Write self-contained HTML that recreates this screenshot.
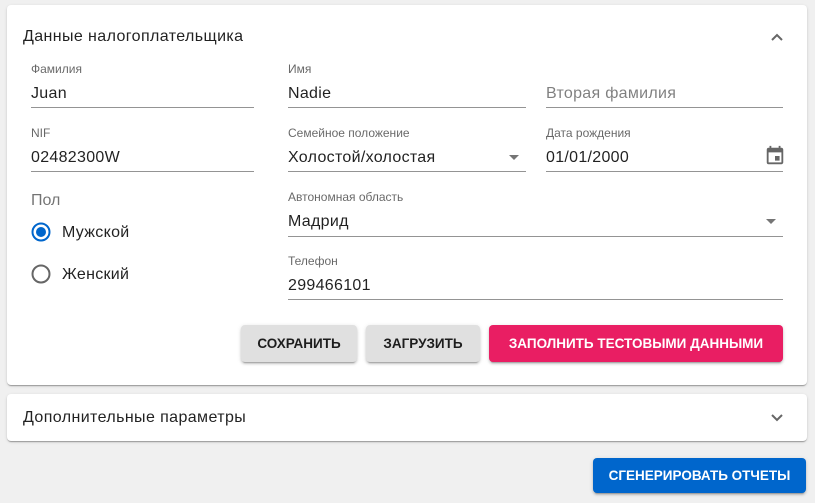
<!DOCTYPE html>
<html><head><meta charset="utf-8"><style>
*{box-sizing:border-box;margin:0;padding:0}
body{width:815px;height:503px;background:#f0f0f0;font-family:"Liberation Sans","Noto Sans CJK SC",sans-serif;position:relative;overflow:hidden;color:rgba(0,0,0,.87)}
.card{position:absolute;background:#fff;border-radius:4px;box-shadow:0 2px 1px -1px rgba(0,0,0,.2),0 1px 1px 0 rgba(0,0,0,.14),0 1px 3px 0 rgba(0,0,0,.12)}
.a{position:absolute;white-space:nowrap}
.lbl{font-size:12px;color:rgba(0,0,0,.6)}
.val{font-size:16px;color:rgba(0,0,0,.87);letter-spacing:.3px}
.ph{font-size:16px;color:rgba(0,0,0,.5);letter-spacing:.3px}
.line{position:absolute;height:1px;background:rgba(0,0,0,.42)}
.btn{position:absolute;border-radius:4px;font-size:13.5px;font-weight:bold;letter-spacing:0;display:flex;align-items:center;justify-content:center;box-shadow:0 3px 1px -2px rgba(0,0,0,.2),0 2px 2px 0 rgba(0,0,0,.14),0 1px 5px 0 rgba(0,0,0,.12)}
.tri{position:absolute;width:0;height:0;border-left:5px solid transparent;border-right:5px solid transparent;border-top:5px solid rgba(0,0,0,.54)}
</style></head><body>
<div class="card" style="left:7px;top:5px;width:800px;height:380px"></div>
<div class="card" style="left:7px;top:394px;width:800px;height:47px"></div>
<div class="a" style="left:23px;top:28px;font-size:16px;letter-spacing:.4px">Данные налогоплательщика</div>
<svg class="a" style="left:770px;top:32px" width="14" height="10" viewBox="0 0 14 10"><path d="M2 8 L7 3 L12 8" fill="none" stroke="rgba(0,0,0,.6)" stroke-width="2"/></svg>

<div class="a lbl" style="left:31px;top:62px">Фамилия</div>
<div class="a val" style="left:31px;top:85px">Juan</div>
<div class="line" style="left:31px;top:107px;width:223px"></div>
<div class="a lbl" style="left:288px;top:62px">Имя</div>
<div class="a val" style="left:288px;top:85px">Nadie</div>
<div class="line" style="left:288px;top:107px;width:238px"></div>
<div class="a ph" style="left:546px;top:85px">Вторая фамилия</div>
<div class="line" style="left:546px;top:107px;width:237px"></div>

<div class="a lbl" style="left:31px;top:126px">NIF</div>
<div class="a val" style="left:31px;top:149px">02482300W</div>
<div class="line" style="left:31px;top:171px;width:223px"></div>
<div class="a lbl" style="left:288px;top:126px">Семейное положение</div>
<div class="a val" style="left:288px;top:149px">Холостой/холостая</div>
<div class="tri" style="left:509px;top:155px"></div>
<div class="line" style="left:288px;top:171px;width:238px"></div>
<div class="a lbl" style="left:546px;top:126px">Дата рождения</div>
<div class="a val" style="left:546px;top:149px">01/01/2000</div>
<svg class="a" style="left:764px;top:145px" width="22" height="22" viewBox="0 0 24 24"><path fill="rgba(0,0,0,.6)" d="M17 12h-5v5h5v-5zM16 1v2H8V1H6v2H5c-1.11 0-2 .9-2 2v14a2 2 0 0 0 2 2h14c1.1 0 2-.9 2-2V5c0-1.1-.9-2-2-2h-1V1h-2zm3 18H5V8h14v11z"/></svg>
<div class="line" style="left:546px;top:171px;width:237px"></div>

<div class="a" style="left:31px;top:192px;font-size:16px;color:rgba(0,0,0,.55)">Пол</div>
<svg class="a" style="left:31px;top:222px" width="20" height="20"><circle cx="10" cy="10" r="8.5" fill="none" stroke="#0066cc" stroke-width="2"/><circle cx="10" cy="10" r="5" fill="#0066cc"/></svg>
<div class="a val" style="left:62px;top:224px">Мужской</div>
<svg class="a" style="left:31px;top:264px" width="20" height="20"><circle cx="10" cy="10" r="8.5" fill="none" stroke="rgba(0,0,0,.6)" stroke-width="2"/></svg>
<div class="a val" style="left:62px;top:266px">Женский</div>

<div class="a lbl" style="left:288px;top:190px">Автономная область</div>
<div class="a val" style="left:288px;top:213px">Мадрид</div>
<div class="tri" style="left:766px;top:219px"></div>
<div class="line" style="left:288px;top:236px;width:495px"></div>
<div class="a lbl" style="left:288px;top:254px">Телефон</div>
<div class="a val" style="left:288px;top:277px">299466101</div>
<div class="line" style="left:288px;top:299px;width:495px"></div>

<div class="btn" style="left:241px;top:325px;width:116px;height:37px;background:#e0e0e0;color:rgba(0,0,0,.87)">СОХРАНИТЬ</div>
<div class="btn" style="left:366px;top:325px;width:114px;height:37px;background:#e0e0e0;color:rgba(0,0,0,.87)">ЗАГРУЗИТЬ</div>
<div class="btn" style="left:489px;top:325px;width:294px;height:37px;background:#e91e63;color:#fff">ЗАПОЛНИТЬ ТЕСТОВЫМИ ДАННЫМИ</div>

<div class="a" style="left:23px;top:409px;font-size:16px;letter-spacing:.4px">Дополнительные параметры</div>
<svg class="a" style="left:770px;top:413px" width="14" height="10" viewBox="0 0 14 10"><path d="M2 2 L7 7 L12 2" fill="none" stroke="rgba(0,0,0,.6)" stroke-width="2"/></svg>

<div class="btn" style="left:593px;top:458px;width:213px;height:35px;background:#0066cc;color:#fff">СГЕНЕРИРОВАТЬ ОТЧЕТЫ</div>
</body></html>
